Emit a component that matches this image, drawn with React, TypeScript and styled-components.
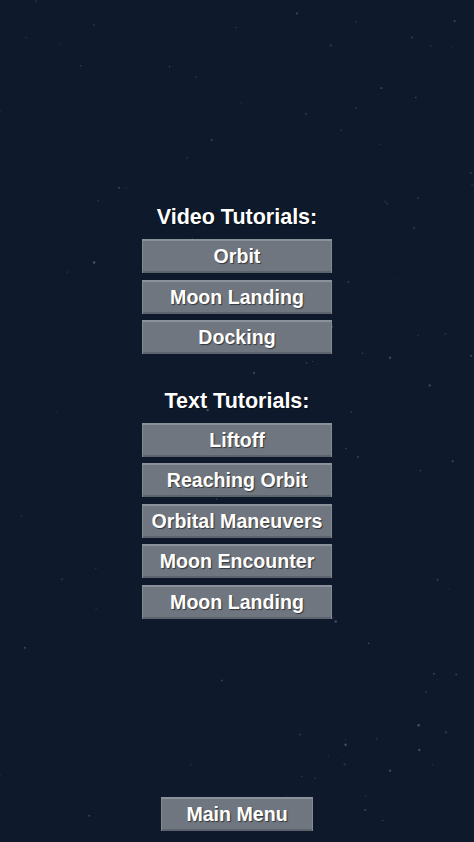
import React from "react";
import styled, { createGlobalStyle } from "styled-components";

const GlobalStyle = createGlobalStyle`
  html, body {
    margin: 0;
    padding: 0;
    background: #0e1a2b;
  }
  #root {
    min-height: 100vh;
  }
`;

const Screen = styled.div`
  position: relative;
  width: 474px;
  height: 842px;
  overflow: hidden;
  background: #0e1a2b;
  display: flex;
  flex-direction: column;
  align-items: center;
  padding: 205px 0 11px;
  box-sizing: border-box;
  font-family: "Liberation Sans", Arial, sans-serif;
`;

const StarField = styled.svg`
  position: absolute;
  inset: 0;
  pointer-events: none;
`;

const Section = styled.section<{ $spaceAfter?: number }>`
  position: relative;
  display: flex;
  flex-direction: column;
  align-items: center;
  margin-bottom: ${(p) => p.$spaceAfter ?? 0}px;
`;

const Heading = styled.h2`
  margin: 0 0 10px;
  font-size: 21.5px;
  line-height: 24px;
  font-weight: 700;
  color: #ffffff;
  text-shadow: 1px 1px 1px rgba(0, 0, 0, 0.5);
`;

const ButtonList = styled.div`
  display: flex;
  flex-direction: column;
  gap: 6.6px;
`;

const MenuButton = styled.button<{ $width?: number }>`
  width: ${(p) => p.$width ?? 190}px;
  height: 34px;
  padding: 1px 0 0;
  border: none;
  background: #6f767f;
  box-shadow: inset 0 2px 0 #8a919a, inset 1px 0 0 #838a93,
    inset -1px 0 0 #838a93, inset 0 -2px 0 #5d636c;
  color: #ffffff;
  font-family: "Liberation Sans", Arial, sans-serif;
  font-weight: 700;
  font-size: 19.6px;
  line-height: 33px;
  text-align: center;
  white-space: nowrap;
  text-shadow: 1px 1px 1px rgba(0, 0, 0, 0.55);
  cursor: pointer;
`;

const Footer = styled.div`
  position: relative;
  margin-top: auto;
`;

const videoTutorials = ["Orbit", "Moon Landing", "Docking"];
const textTutorials = [
  "Liftoff",
  "Reaching Orbit",
  "Orbital Maneuvers",
  "Moon Encounter",
  "Moon Landing",
];

// deterministic scatter of faint stars
const stars = (() => {
  let seed = 7;
  const rand = () => {
    seed = (seed * 16807) % 2147483647;
    return seed / 2147483647;
  };
  return Array.from({ length: 110 }, () => ({
    x: rand() * 474,
    y: rand() * 842,
    r: 0.5 + rand() * 0.8,
    o: 0.12 + rand() * 0.3,
  }));
})();

const App = () => {
  return (
    <>
      <GlobalStyle />
      <Screen>
        <StarField width="474" height="842" viewBox="0 0 474 842">
          {stars.map((s, i) => (
            <circle key={i} cx={s.x} cy={s.y} r={s.r} fill="#8da0b8" opacity={s.o} />
          ))}
        </StarField>
        <Section $spaceAfter={34.5}>
          <Heading>Video Tutorials:</Heading>
          <ButtonList>
            {videoTutorials.map((t) => (
              <MenuButton key={t}>{t}</MenuButton>
            ))}
          </ButtonList>
        </Section>
        <Section>
          <Heading>Text Tutorials:</Heading>
          <ButtonList>
            {textTutorials.map((t) => (
              <MenuButton key={t}>{t}</MenuButton>
            ))}
          </ButtonList>
        </Section>
        <Footer>
          <MenuButton $width={152}>Main Menu</MenuButton>
        </Footer>
      </Screen>
    </>
  );
};

export default App;
